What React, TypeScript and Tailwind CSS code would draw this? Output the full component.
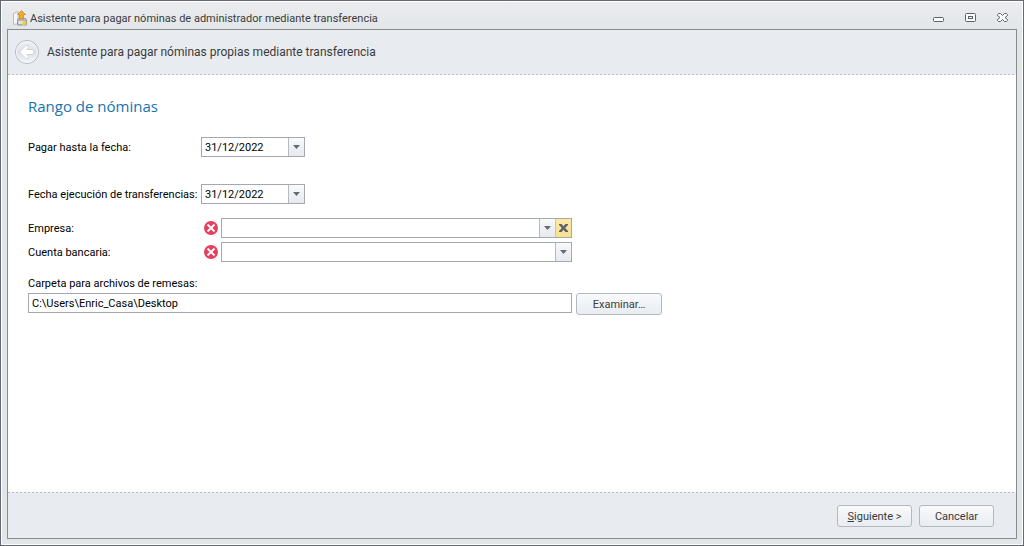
import clsx from "clsx";
import { FC, ReactNode, useRef, useState } from "react";

const DashedLine: FC = () => (
  <div className="h-px shrink-0 bg-[repeating-linear-gradient(90deg,#b5bbc7_0_2px,#e8ebf0_2px_4px)]" />
);

const AppIcon: FC = () => (
  <svg width="16" height="16" viewBox="0 0 16 16" aria-hidden="true">
    <path d="M1.500 3.500 6 1.500v12l-4.500 1z" fill="#f6f6f4" stroke="#bdbdba" />
    <path d="M6.500 8.500h7l1 1.500v5h-9v-5z" fill="#b4bac0" stroke="#959ba1" />
    <path d="M6.500 11h5v3h-5z" fill="#dfe2e4" />
    <path d="M9.500 0.500 13.500 4.500h-2V9h-4V4.500h-2z" fill="#f7a828" stroke="#cf8a26" strokeWidth="0.800" />
    <path d="m12 10.500 1 1.500 2 .5-1.500 1 .5 2-2-1-2 1 .500-2-1-1 2-.5z" fill="#ffd21f" />
  </svg>
);

const BackIcon: FC = () => (
  <svg width="26" height="26" viewBox="0 0 26 26" aria-hidden="true">
    <defs>
      <linearGradient id="back" x1="0" y1="0" x2="0" y2="1">
        <stop offset="0" stopColor="#f0f2f5" />
        <stop offset="0.5" stopColor="#dde1e6" />
        <stop offset="1" stopColor="#f4f6f8" />
      </linearGradient>
    </defs>
    <circle cx="13" cy="13" r="11.500" fill="url(#back)" stroke="#b4b8bf" />
    <circle cx="13" cy="13" r="10.500" fill="none" stroke="#f6f8fa" />
    <path
      d="M5.500 13 12 6.500q1-.8 2 .2 1.200 1.200.3 2.200L12.800 10.500H18q1.800 0 1.800 1.500v2q0 1.500-1.800 1.500h-5.200l1.500 1.600q.9 1-.3 2.200-1 1-2 .2z"
      fill="#fff"
      stroke="#c6cbd2"
      strokeWidth="0.800"
      strokeLinejoin="round"
    />
  </svg>
);

const ErrorIcon: FC = () => (
  <svg width="14" height="14" viewBox="0 0 14 14" className="shrink-0" role="img" aria-label="Error">
    <circle cx="7" cy="7" r="7" fill="#e5405b" />
    <path d="m3.500 3.500 7 7M10.500 3.500l-7 7" stroke="#fff" strokeWidth="1.800" />
  </svg>
);

const MinimizeIcon: FC = () => (
  <svg width="13" height="11" viewBox="0 0 13 11" aria-hidden="true">
    <rect x="1.500" y="5.500" width="10" height="4" rx="1" fill="#fbfcfc" stroke="#5a616b" />
  </svg>
);

const MaximizeIcon: FC = () => (
  <svg width="13" height="11" viewBox="0 0 13 11" aria-hidden="true">
    <rect x="1.500" y="1.500" width="10" height="8" rx="1" fill="#fbfcfc" stroke="#5a616b" />
    <rect x="4.500" y="4.500" width="4" height="2" fill="#fff" stroke="#5a616b" />
  </svg>
);

const CloseIcon: FC = () => (
  <svg width="13" height="11" viewBox="0 0 13 11" aria-hidden="true">
    <path
      d="M2.500 1.500h2l2 2 2-2h2l1 1v1l-2.500 2 2.500 2v1l-1 1h-2l-2-2-2 2h-2l-1-1v-1l2.500-2-2.500-2v-1z"
      fill="#fbfcfc"
      stroke="#5a616b"
      strokeLinejoin="round"
    />
  </svg>
);

interface ISideButtonProps {
  label: string;
  variant?: "arrow" | "clear";
  onClick?: () => void;
}

const SideButton: FC<ISideButtonProps> = ({ label, variant = "arrow", onClick }) => (
  <button
    type="button"
    aria-label={label}
    onClick={onClick}
    className={clsx(
      "flex w-4 shrink-0 items-center justify-center border-l",
      variant === "clear"
        ? "border-[#e3c56d] bg-linear-to-b from-[#fbe9a6] to-[#f8e08e]"
        : "border-[#b4b9c3] bg-linear-to-b from-[#f8fafb] to-[#e6e9ee]",
    )}
  >
    {variant === "clear" ? (
      <svg width="9" height="8" viewBox="0 0 9 8" aria-hidden="true">
        <path d="M0 0h2.600l1.900 2.300L6.400 0H9v1L6.200 4 9 7v1H6.400L4.500 5.700 2.600 8H0V7l2.800-3L0 1z" fill="#5c6470" />
      </svg>
    ) : (
      <svg width="7" height="4" viewBox="0 0 7 4" aria-hidden="true">
        <path d="M0 0h7L3.500 4z" fill="#646b76" />
      </svg>
    )}
  </button>
);

interface IFieldRowProps {
  id: string;
  label: string;
  children: ReactNode;
}

const FieldRow: FC<IFieldRowProps> = ({ id, label, children }) => (
  <div className="flex h-5 items-center">
    <label htmlFor={id} className="w-[173px] shrink-0 pt-0.5 whitespace-nowrap">
      {label}
    </label>
    {children}
  </div>
);

const DateField: FC<{ id: string }> = ({ id }) => (
  <div className="flex h-5 w-26 border border-[#a3a8b3] bg-white">
    <input id={id} type="text" defaultValue="31/12/2022" className="min-w-0 flex-1 px-[3px] pt-px outline-none" />
    <SideButton label="Abrir calendario" />
  </div>
);

const ComboField: FC<{ id: string; clearable?: boolean }> = ({ id, clearable }) => {
  const ref = useRef<HTMLSelectElement>(null);
  const [value, setValue] = useState("");

  return (
    <div className="flex min-w-0 flex-1 items-center gap-[3px] pl-[3px]">
      <ErrorIcon />
      <div className="flex h-5 min-w-0 flex-1 border border-[#a3a8b3] bg-white">
        <select
          id={id}
          ref={ref}
          value={value}
          onChange={(e) => setValue(e.target.value)}
          className="min-w-0 flex-1 appearance-none px-[3px] outline-none"
        >
          <option value="" />
        </select>
        <SideButton label="Desplegar" onClick={() => ref.current?.showPicker()} />
        {clearable && <SideButton label="Borrar" variant="clear" onClick={() => setValue("")} />}
      </div>
    </div>
  );
};

const PushButton: FC<{ className?: string; children: ReactNode }> = ({ className, children }) => (
  <button
    type="button"
    className={clsx(
      "h-[22px] shrink-0 rounded-[3px] border border-[#b3b8c1] bg-linear-to-b from-[#f8fafc] to-[#e9ecf0] pt-0.5 text-[#3b3b3b]",
      className,
    )}
  >
    {children}
  </button>
);

const App: FC = () => (
  <div className="flex min-h-screen flex-col border border-[#646a75] bg-white p-px font-[Roboto,'Liberation_Sans',sans-serif] text-[11px] leading-4 text-black">
    <div className="flex flex-1 flex-col bg-[#e2e6e9] bg-linear-to-b from-[#ebecf0] to-[#e2e6e9] to-[28px] px-[5px] pb-[5px]">
      <header className="flex h-[27px] shrink-0 items-center justify-between pt-1 pr-2 pl-[5px]">
        <div className="flex items-center gap-[2px] text-[#3b3b3b]">
          <AppIcon />
          <h1 className="pt-0.5">Asistente para pagar nóminas de administrador mediante transferencia</h1>
        </div>
        <div className="flex items-center gap-[19px]">
          <button type="button" aria-label="Minimizar">
            <MinimizeIcon />
          </button>
          <button type="button" aria-label="Maximizar">
            <MaximizeIcon />
          </button>
          <button type="button" aria-label="Cerrar">
            <CloseIcon />
          </button>
        </div>
      </header>

      <main className="flex flex-1 flex-col border border-[#868d91] bg-white">
        <div className="flex h-11 shrink-0 items-center gap-[7px] bg-[#e8ebf0] px-[6px] text-xs text-[#3b3b3b]">
          <button type="button" aria-label="Atrás">
            <BackIcon />
          </button>
          <p>Asistente para pagar nóminas propias mediante transferencia</p>
        </div>
        <DashedLine />

        <form className="flex-1 px-5 pt-5">
          <h2 className="font-['Open_Sans','Noto_Sans',sans-serif] text-[15px] leading-[22px] text-[#1673b1]">
            Rango de nóminas
          </h2>
          <div className="mt-5 flex max-w-[544px] flex-col">
            <FieldRow id="pay-until" label="Pagar hasta la fecha:">
              <DateField id="pay-until" />
            </FieldRow>
            <div className="mt-[27px]">
              <FieldRow id="run-date" label="Fecha ejecución de transferencias:">
                <DateField id="run-date" />
              </FieldRow>
            </div>
            <div className="mt-[14px] flex flex-col gap-1">
              <FieldRow id="company" label="Empresa:">
                <ComboField id="company" clearable />
              </FieldRow>
              <FieldRow id="account" label="Cuenta bancaria:">
                <ComboField id="account" />
              </FieldRow>
            </div>
          </div>
          <label htmlFor="folder" className="mt-[14px] block">
            Carpeta para archivos de remesas:
          </label>
          <div className="mt-px flex items-start gap-1">
            <input
              id="folder"
              type="text"
              defaultValue="C:\Users\Enric_Casa\Desktop"
              className="h-5 w-full max-w-[544px] border border-[#a3a8b3] bg-white px-[3px] outline-none"
            />
            <PushButton className="w-[86px]">Examinar…</PushButton>
          </div>
        </form>

        <DashedLine />
        <footer className="flex h-[45px] shrink-0 items-center justify-end gap-[7px] bg-[#e8ebf0] px-[22px]">
          <PushButton className="w-[75px]">
            <u>S</u>iguiente &gt;
          </PushButton>
          <PushButton className="w-[75px]">Cancelar</PushButton>
        </footer>
      </main>
    </div>
  </div>
);

export default App;
